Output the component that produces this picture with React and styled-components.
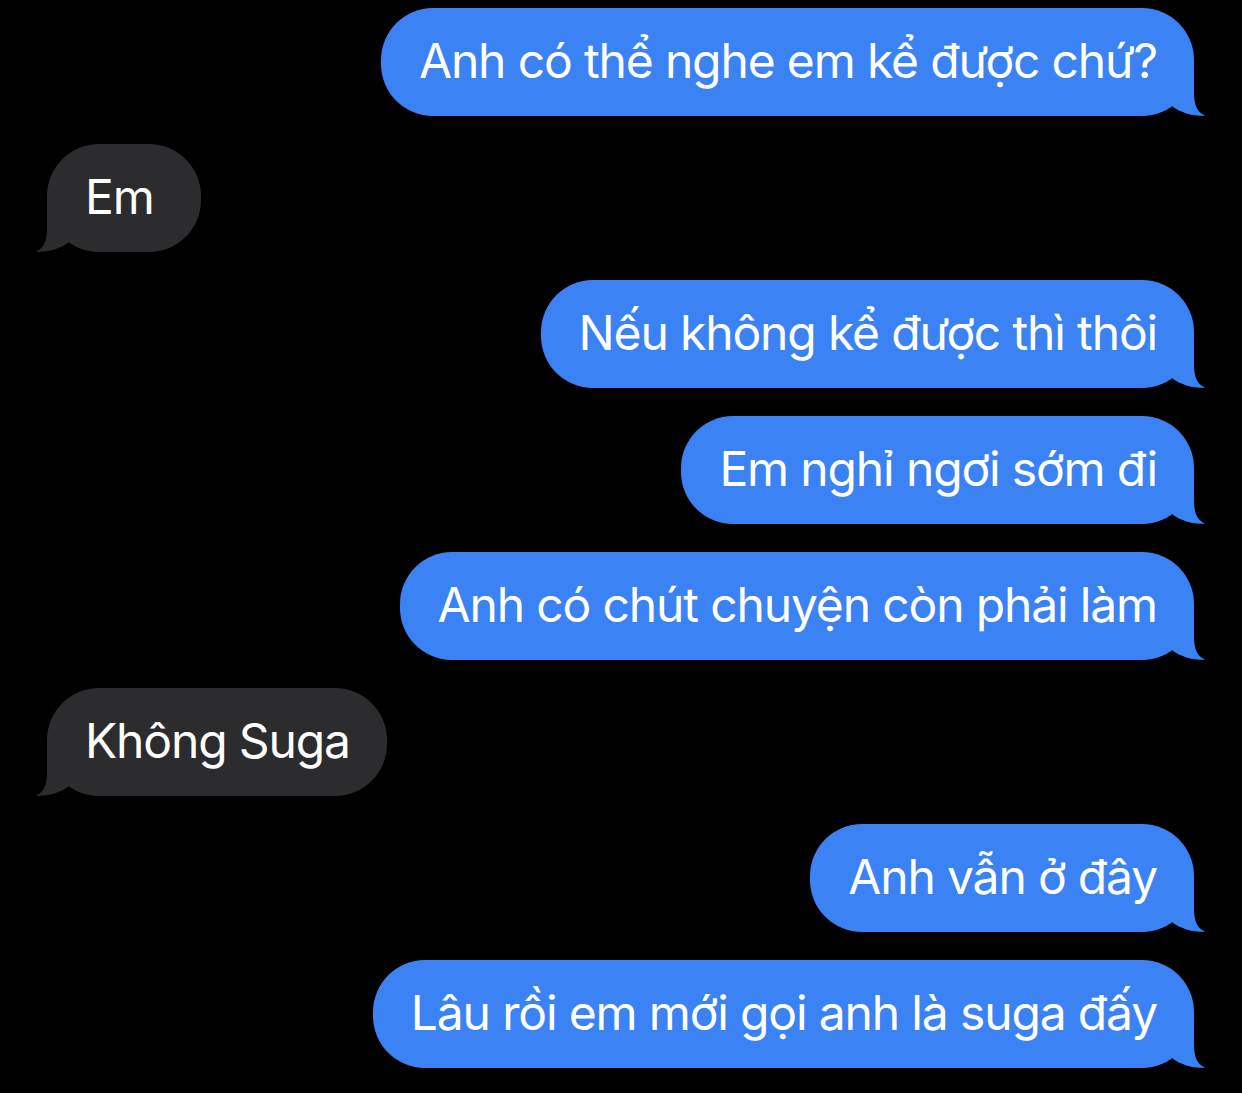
import React from "react";
import styled, { createGlobalStyle } from "styled-components";

const Global = createGlobalStyle`
  html, body { margin: 0; padding: 0; background: #000; }
  body { font-family: "Inter", "Noto Sans", "Liberation Sans", sans-serif; }
`;

const Thread = styled.div`
  display: flex;
  flex-direction: column;
  gap: 28px;
  padding: 8px 48px 24px 47px;
  min-height: 1093px;
  box-sizing: border-box;
  background: #000;
`;

const Bubble = styled.div`
  position: relative;
  align-self: ${(p) => (p.$me ? "flex-end" : "flex-start")};
  background: ${(p) => (p.$me ? "#3b82f4" : "#2c2c2e")};
  color: #fff;
  font-size: 48px;
  line-height: 60px;
  letter-spacing: -1.15px;
  padding: 23px 37px 25px 38px;
  min-width: 79px;
  border-radius: 52px;
  white-space: nowrap;
`;

const Tail = styled.svg`
  position: absolute;
  bottom: 0;
  width: 56px;
  height: 50px;
  ${(p) => (p.$me ? "right: -12px;" : "left: -12px; transform: scaleX(-1);")}
  fill: ${(p) => (p.$me ? "#3b82f4" : "#2c2c2e")};
`;

const Message = ({ me, children }) => (
  <Bubble $me={me}>
    {children}
    <Tail $me={me} viewBox="0 0 56 50">
      <path d="M22 0 H44 V26 C44 39 47 46 55 49.5 C46 50.5 32 48 22 40 Z" />
    </Tail>
  </Bubble>
);

const messages = [
  { me: true, text: "Anh có thể nghe em kể được chứ?" },
  { me: false, text: "Em" },
  { me: true, text: "Nếu không kể được thì thôi" },
  { me: true, text: "Em nghỉ ngơi sớm đi" },
  { me: true, text: "Anh có chút chuyện còn phải làm" },
  { me: false, text: "Không Suga" },
  { me: true, text: "Anh vẫn ở đây" },
  { me: true, text: "Lâu rồi em mới gọi anh là suga đấy" },
];

export default function App() {
  return (
    <>
      <Global />
      <Thread>
        {messages.map((m, i) => (
          <Message key={i} me={m.me}>
            {m.text}
          </Message>
        ))}
      </Thread>
    </>
  );
}
